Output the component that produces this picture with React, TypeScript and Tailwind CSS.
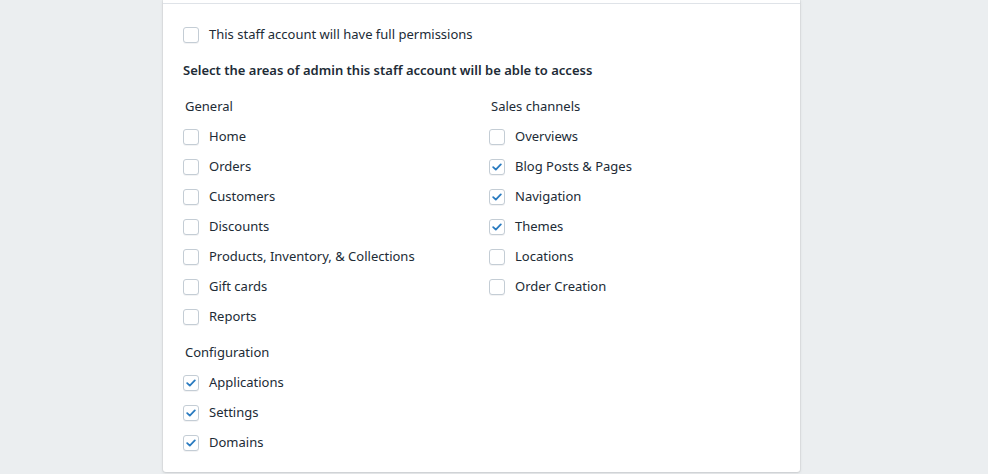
import React from "react";

function Box({ checked }: { checked?: boolean }) {
  return (
    <span className="flex h-4 w-4 shrink-0 items-center justify-center rounded-[3px] border border-[#c4cdd5] bg-white shadow-[0_1px_0_rgba(22,29,37,0.05)]">
      {checked && (
        <svg width="10" height="8" viewBox="0 0 10 8">
          <path d="M1.2 4.2 L3.8 6.6 L8.8 1.4" fill="none" stroke="#2a7bc0" strokeWidth="1.8" strokeLinecap="round" strokeLinejoin="round" />
        </svg>
      )}
    </span>
  );
}

function Row({ label, checked }: { label: string; checked?: boolean }) {
  return (
    <div className="flex h-[30px] items-center gap-[10px]">
      <Box checked={checked} />
      <span>{label}</span>
    </div>
  );
}

function Heading({ children, className = "" }: { children: React.ReactNode; className?: string }) {
  return <div className={`flex h-[30px] items-center pl-[2px] ${className}`}>{children}</div>;
}

export default function App() {
  const general = ["Home", "Orders", "Customers", "Discounts", "Products, Inventory, & Collections", "Gift cards", "Reports"];
  const sales: [string, boolean][] = [
    ["Overviews", false],
    ["Blog Posts & Pages", true],
    ["Navigation", true],
    ["Themes", true],
    ["Locations", false],
    ["Order Creation", false],
  ];
  return (
    <div className="flex min-h-[474px] justify-center bg-[#ebeef0] text-[13px] text-[#212b36]" style={{ fontFamily: '"Noto Sans", "Open Sans", sans-serif' }}>
      <div className="mb-[2px] ml-[-25px] w-[637px] self-start rounded-b-[3px] bg-white shadow-[0_0_0_1px_rgba(63,63,68,0.05),0_1px_3px_0_rgba(63,63,68,0.15)]">
        <div className="h-[4px] border-b border-[#dfe3e8]" />
        <div className="px-[20px] pt-[16px] pb-[14px]">
          <Row label="This staff account will have full permissions" />
          <div className="flex h-[42px] items-center font-semibold">Select the areas of admin this staff account will be able to access</div>
          <div className="flex">
            <div className="w-[306px]">
              <Heading>General</Heading>
              {general.map((g) => (
                <Row key={g} label={g} />
              ))}
              <Heading className="mt-[6px]">Configuration</Heading>
              <Row label="Applications" checked />
              <Row label="Settings" checked />
              <Row label="Domains" checked />
            </div>
            <div>
              <Heading>Sales channels</Heading>
              {sales.map(([s, c]) => (
                <Row key={s} label={s} checked={c} />
              ))}
            </div>
          </div>
        </div>
      </div>
    </div>
  );
}
